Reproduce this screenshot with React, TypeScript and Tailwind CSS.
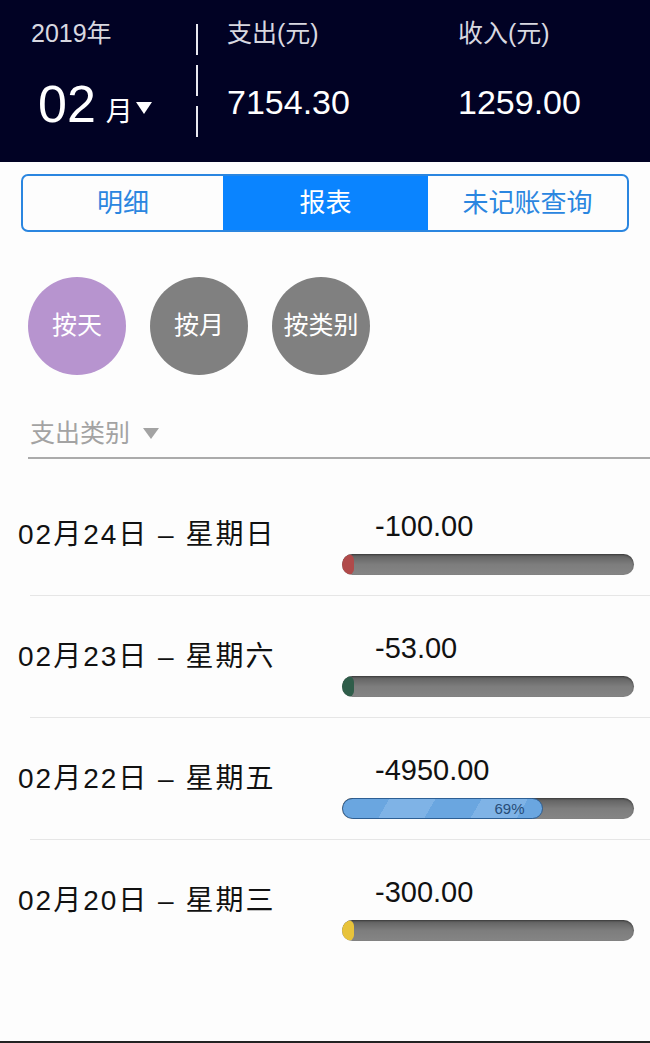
import React from "react";

const font = { fontFamily: '"Liberation Sans", "Noto Sans CJK SC", sans-serif' };

type Row = {
  date: string;
  amount: string;
  pct: number;
  cap: string;
};

const rows: Row[] = [
  { date: "02月24日 – 星期日", amount: "-100.00", pct: 0, cap: "bg-[#b04a4a]" },
  { date: "02月23日 – 星期六", amount: "-53.00", pct: 0, cap: "bg-[#2f5d4a]" },
  { date: "02月22日 – 星期五", amount: "-4950.00", pct: 69, cap: "" },
  { date: "02月20日 – 星期三", amount: "-300.00", pct: 0, cap: "bg-[#e8c33a]" },
];

function Bar({ pct, cap }: { pct: number; cap: string }) {
  return (
    <div className="relative h-[21px] w-[292px] overflow-hidden rounded-full bg-gradient-to-b from-[#5e5e5e] via-[#7d7d7d] to-[#858585] shadow-[inset_0_1px_2px_rgba(0,0,0,0.4)]">
      {pct > 0 ? (
        <div
          className="absolute inset-y-0 left-0 flex items-center justify-end rounded-full border border-[#2d5f94] bg-[repeating-linear-gradient(120deg,#6aa6e0_0px,#6aa6e0_40px,#7fb3e6_40px,#7fb3e6_80px)] pr-[18px]"
          style={{ width: `${pct}%` }}
        >
          <span className="text-[15px] leading-none text-[#274d78]">{pct}%</span>
        </div>
      ) : (
        <div className={`absolute inset-y-0 left-0 w-[12px] rounded-full ${cap}`} />
      )}
    </div>
  );
}

export default function App() {
  return (
    <div className="flex h-[1043px] w-[650px] flex-col overflow-hidden bg-[#fdfdfd]" style={font}>
      {/* header */}
      <div className="flex h-[162px] bg-[#010224] text-white">
        <div className="flex w-[196px] flex-col pl-[31px] pt-[17px]">
          <span className="text-[25px] leading-[32px] text-[#d8d8e0]">2019年</span>
          <div className="mt-[32px] flex items-end pl-[7px]">
            <span className="text-[52px] leading-[46px]">02</span>
            <span className="ml-[10px] text-[27px] leading-[30px]">月</span>
            <svg width="18" height="14" viewBox="0 0 18 14" className="mb-[12px] ml-[2px]">
              <path d="M1 1h16L9 13z" fill="#fff" />
            </svg>
          </div>
        </div>
        <div className="flex flex-col gap-[10px] pt-[24px]">
          <div className="h-[31px] w-[2px] bg-[#e8e8f0]" />
          <div className="h-[31px] w-[2px] bg-[#e8e8f0]" />
          <div className="h-[31px] w-[2px] bg-[#e8e8f0]" />
        </div>
        <div className="flex w-[260px] flex-col pl-[29px] pt-[17px]">
          <span className="text-[25px] leading-[32px] text-[#d8d8e0]">支出(元)</span>
          <span className="mt-[33px] text-[34px] leading-[40px]">7154.30</span>
        </div>
        <div className="flex flex-col pt-[17px]">
          <span className="text-[25px] leading-[32px] text-[#d8d8e0]">收入(元)</span>
          <span className="mt-[33px] text-[34px] leading-[40px]">1259.00</span>
        </div>
      </div>

      {/* tabs */}
      <div className="mx-[21px] mt-[12px] flex h-[58px] overflow-hidden rounded-[7px] border-2 border-[#2a86e0] text-[26px]">
        <div className="flex w-[200px] items-center justify-center text-[#2a86e0]">明细</div>
        <div className="flex w-[205px] items-center justify-center bg-[#0a84ff] text-white">报表</div>
        <div className="flex flex-1 items-center justify-center text-[#2a86e0]">未记账查询</div>
      </div>

      {/* mode circles */}
      <div className="mt-[45px] flex gap-[24px] pl-[28px] text-[25px] text-white">
        <div className="flex h-[98px] w-[98px] items-center justify-center rounded-full bg-[#b794cf]">按天</div>
        <div className="flex h-[98px] w-[98px] items-center justify-center rounded-full bg-[#808080]">按月</div>
        <div className="flex h-[98px] w-[98px] items-center justify-center rounded-full bg-[#808080]">按类别</div>
      </div>

      {/* category select */}
      <div className="ml-[28px] mt-[40px] flex items-center border-b-2 border-[#ababab] pb-[6px] pl-[2px]">
        <span className="text-[25px] leading-[36px] text-[#a3a3a3]">支出类别</span>
        <svg width="18" height="13" viewBox="0 0 18 13" className="ml-[12px]">
          <path d="M1 1h16L9 12z" fill="#a3a3a3" />
        </svg>
      </div>

      {/* rows */}
      <div className="mt-[15px] flex flex-col">
        {rows.map((r, i) => (
          <div key={r.date} className="flex flex-col">
            <div className="flex h-[121px] items-center">
              <span className="w-[342px] pl-[18px] text-[28px] tracking-[2px] text-[#111]">{r.date}</span>
              <div className="flex flex-col pt-[14px]">
                <span className="pl-[33px] text-[29px] leading-[36px] text-[#111]">{r.amount}</span>
                <div className="mt-[10px]">
                  <Bar pct={r.pct} cap={r.cap} />
                </div>
              </div>
            </div>
            {i < rows.length - 1 && <div className="ml-[30px] h-px bg-[#e6e6e6]" />}
          </div>
        ))}
      </div>

      <div className="flex-1" />
      <div className="h-[2px] bg-[#222]" />
    </div>
  );
}
